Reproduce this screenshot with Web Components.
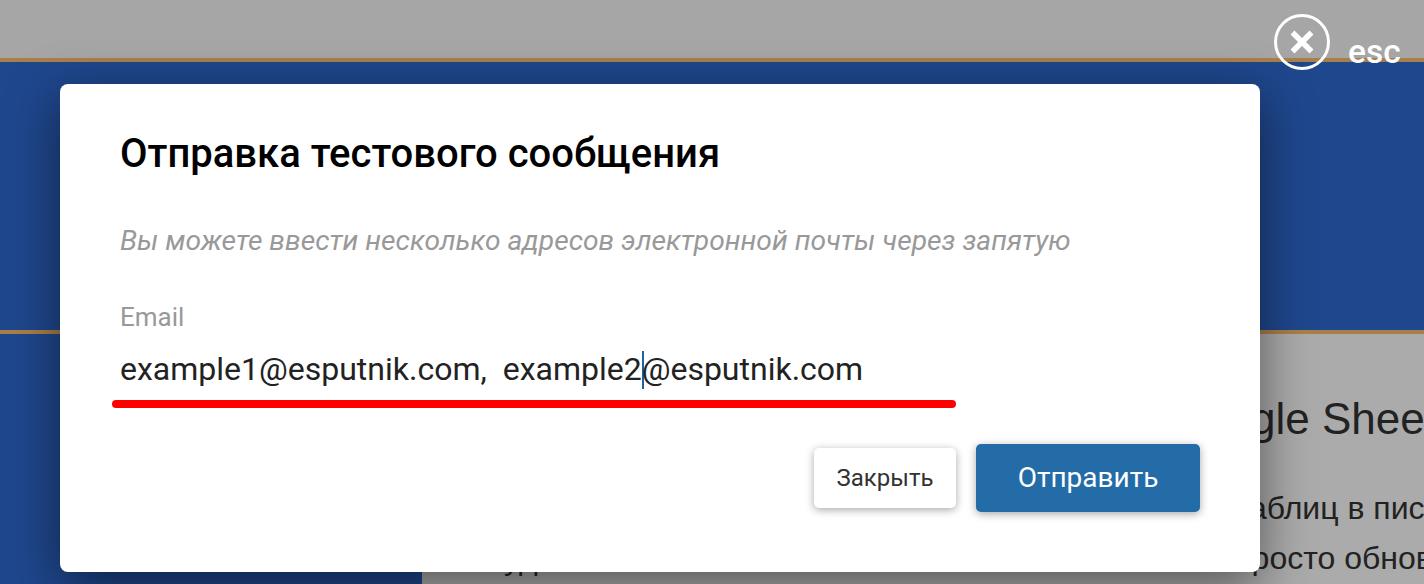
<!DOCTYPE html>
<html lang="ru">
<head>
<meta charset="utf-8">
<title>Отправка тестового сообщения</title>
<style>
  html, body { margin: 0; height: 100%; }
  body { font-family: Roboto, "Liberation Sans", sans-serif; overflow: hidden; }
</style>
</head>
<body>
<test-page>
  <test-backdrop slot="backdrop"></test-backdrop>
  <close-hint slot="close"></close-hint>
  <send-modal title-text="Отправка тестового сообщения" hint="Вы можете ввести несколько адресов электронной почты через запятую">
    <email-field label="Email" before="example1@esputnik.com,&nbsp; example2" after="@esputnik.com"></email-field>
    <modal-button slot="actions">Закрыть</modal-button>
    <modal-button slot="actions" primary>Отправить</modal-button>
  </send-modal>
</test-page>

<script>
// small helper, every element below has its markup + styles in the shadow root
const shadow = (el, html) => {
  el.attachShadow({ mode: "open" }).innerHTML = html;
};

class TestPage extends HTMLElement {
  constructor() {
    super();
    shadow(this, `
      <style>
        :host { display: block; position: relative; width: 1424px; height: 584px; overflow: hidden; }
        .overlay {
          position: absolute; inset: 0;
          display: flex; align-items: flex-start;
          padding: 84px 164px 12px 60px;
          box-sizing: border-box;
        }
      </style>
      <slot name="backdrop"></slot>
      <slot name="close"></slot>
      <div class="overlay"><slot></slot></div>
    `);
  }
}

// the dimmed landing page behind the modal
class TestBackdrop extends HTMLElement {
  constructor() {
    super();
    shadow(this, `
      <style>
        :host { display: flex; flex-direction: column; height: 584px; font-family: "Liberation Sans", Arial, sans-serif; }
        .top { height: 58px; background: #a6a6a6; }
        .hero {
          height: 268px;
          background: #1f478d;
          border-top: 4px solid #a97f49;
          border-bottom: 4px solid #a97f49;
        }
        .body { flex: 1; display: flex; }
        .side { width: 422px; background: #1f478d; }
        .main { flex: 1; background: #ababab; color: #222; padding: 60px 0 0 82px; white-space: nowrap; overflow: hidden; }
        h2 { margin: 0 0 40px 747px; font-size: 44px; font-weight: 400; line-height: 50px; }
        p { margin: 0 0 0 745px; font-size: 32px; line-height: 48px; }
        /* same line runs under the modal, only its first descenders peek out below it */
        .long { display: flex; margin: 2px 0 0; }
        .long span + span { margin-left: 714px; }
      </style>
      <div class="top"></div>
      <div class="hero"></div>
      <div class="body">
        <div class="side"></div>
        <div class="main">
          <h2>gle Shee</h2>
          <p>аблиц в пис</p>
          <p class="long"><span>уд</span><span>росто обнов</span></p>
        </div>
      </div>
    `);
  }
}

class CloseHint extends HTMLElement {
  constructor() {
    super();
    shadow(this, `
      <style>
        :host {
          position: absolute; top: 14px; left: 1274px;
          display: flex; align-items: flex-end; gap: 18px;
          color: #fff; font: 500 33.5px/1 Roboto, sans-serif;
        }
        svg { display: block; width: 56px; height: 56px; }
        span { margin-bottom: 2px; }
      </style>
      <svg viewBox="0 0 56 56" fill="none" stroke="#fff">
        <circle cx="28" cy="28" r="26.5" stroke-width="3"></circle>
        <path d="M18.5 18.5 37.5 37.5M37.5 18.5 18.5 37.5" stroke-width="5.5"></path>
      </svg>
      <span>esc</span>
    `);
  }
}

class SendModal extends HTMLElement {
  constructor() {
    super();
    shadow(this, `
      <style>
        :host {
          display: block; box-sizing: border-box;
          width: 1200px; height: 488px;
          padding: 48px 60px 0;
          background: #fff; border-radius: 8px;
          box-shadow: 0 14px 50px rgba(0,0,0,.5);
          position: relative;
        }
        h1 { margin: 0; font-size: 40px; line-height: 44px; font-weight: 500; color: #000; }
        .hint { margin: 48px 0 0; font-size: 28.2px; line-height: 34px; font-style: italic; color: #999; }
        .actions { display: flex; justify-content: flex-end; align-items: center; gap: 20px; margin-top: 55px; }
      </style>
      <h1></h1>
      <p class="hint"></p>
      <slot></slot>
      <div class="actions"><slot name="actions"></slot></div>
    `);
    this.shadowRoot.querySelector("h1").textContent = this.getAttribute("title-text");
    this.shadowRoot.querySelector(".hint").textContent = this.getAttribute("hint");
  }
}

class EmailField extends HTMLElement {
  constructor() {
    super();
    shadow(this, `
      <style>
        :host { display: block; margin-top: 42px; position: relative; }
        label { display: block; font-size: 26px; line-height: 34px; color: #999; }
        .value { font-size: 32px; line-height: 40px; margin-top: 15px; color: #222; white-space: nowrap; }
        .caret { display: inline-block; width: 2px; height: 38px; margin: 0 -2px 0 0; background: #1f5fae; vertical-align: -9px; }
        .mark {
          position: absolute; left: -8px; top: 100px;
          width: 844px; height: 8px;
          background: #f00; border-radius: 4px;
        }
      </style>
      <label></label>
      <div class="value"><span class="a"></span><span class="caret"></span><span class="b"></span></div>
      <div class="mark"></div>
    `);
    this.shadowRoot.querySelector("label").textContent = this.getAttribute("label");
    this.shadowRoot.querySelector(".a").textContent = this.getAttribute("before");
    this.shadowRoot.querySelector(".b").textContent = this.getAttribute("after");
  }
}

class ModalButton extends HTMLElement {
  constructor() {
    super();
    shadow(this, `
      <style>
        :host {
          display: flex; align-items: center; justify-content: center;
          box-sizing: border-box; width: 142px; height: 60px;
          background: #fff; color: #333; border-radius: 5px;
          font-size: 24px; box-shadow: 0 2px 8px rgba(0,0,0,.35);
        }
        :host([primary]) {
          width: 224px; height: 68px; padding-bottom: 2px;
          background: #236ca7; color: #fff; font-size: 28px; font-weight: 400;
        }
      </style>
      <slot></slot>
    `);
  }
}

customElements.define("test-page", TestPage);
customElements.define("test-backdrop", TestBackdrop);
customElements.define("close-hint", CloseHint);
customElements.define("send-modal", SendModal);
customElements.define("email-field", EmailField);
customElements.define("modal-button", ModalButton);
</script>
</body>
</html>
